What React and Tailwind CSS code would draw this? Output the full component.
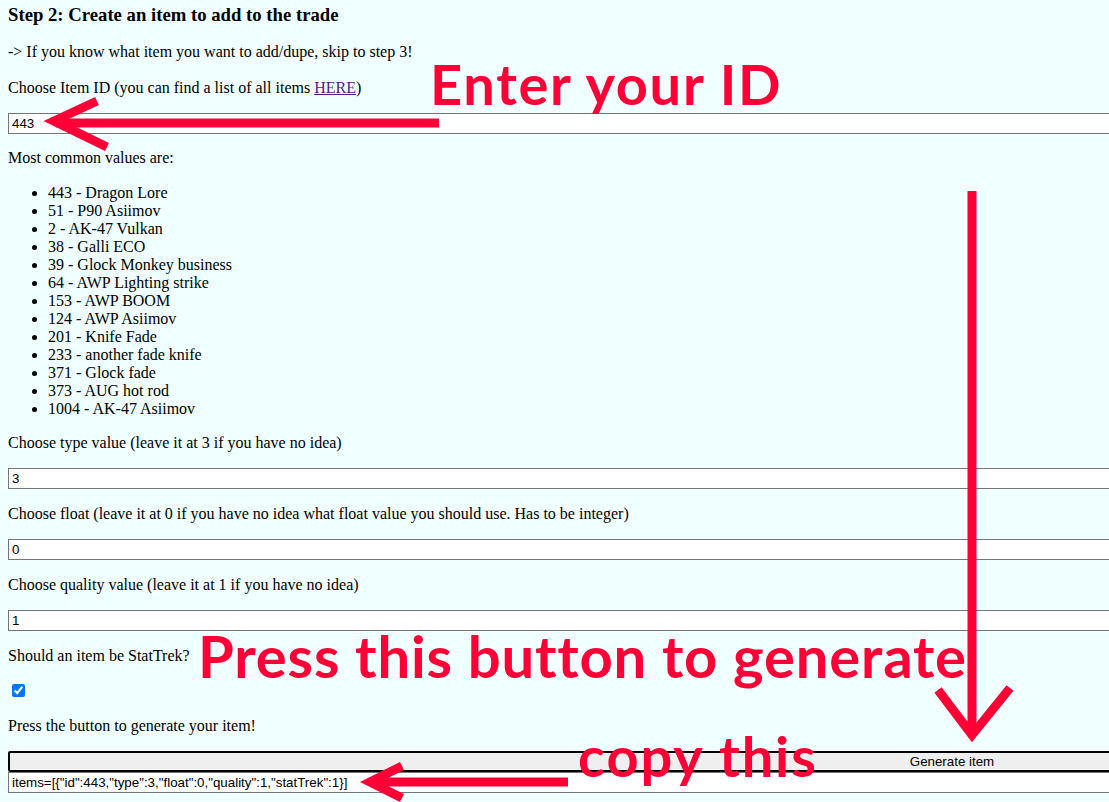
const items = [
  "443 - Dragon Lore",
  "51 - P90 Asiimov",
  "2 - AK-47 Vulkan",
  "38 - Galli ECO",
  "39 - Glock Monkey business",
  "64 - AWP Lighting strike",
  "153 - AWP BOOM",
  "124 - AWP Asiimov",
  "201 - Knife Fade",
  "233 - another fade knife",
  "371 - Glock fade",
  "373 - AUG hot rod",
  "1004 - AK-47 Asiimov",
];

function Field({ value, className = "" }) {
  return (
    <input
      readOnly
      value={value}
      className={
        "block w-full h-[21px] border border-[#767676] bg-white px-[3px] text-[13.33px] font-['Liberation_Sans',Arial,sans-serif] text-black outline-none " +
        className
      }
    />
  );
}

export default function App() {
  return (
    <div className="relative w-[1109px] h-[802px] overflow-hidden bg-[#f0ffff] text-black font-['Liberation_Serif','Times_New_Roman',serif] text-[16px] leading-[18px]">
      <div className="w-[1904px] px-2 pt-[5px]">
        <h3 className="text-[18.72px] leading-[20px] font-bold">
          Step 2: Create an item to add to the trade
        </h3>
        <p className="mt-[18px]">
          -&gt; If you know what item you want to add/dupe, skip to step 3!
        </p>
        <p className="mt-[18px]">
          Choose Item ID (you can find a list of all items{" "}
          <a href="#" className="text-[#551a8b] underline">
            HERE
          </a>
          )
        </p>
        <Field value="443" className="mt-4" />
        <p className="mt-[15px]">Most common values are:</p>
        <ul className="mt-[17px] list-disc pl-10">
          {items.map((it) => (
            <li key={it}>{it}</li>
          ))}
        </ul>
        <p className="mt-4">Choose type value (leave it at 3 if you have no idea)</p>
        <Field value="3" className="mt-4" />
        <p className="mt-4">
          Choose float (leave it at 0 if you have no idea what float value you should use. Has to be integer)
        </p>
        <Field value="0" className="mt-4" />
        <p className="mt-4">Choose quality value (leave it at 1 if you have no idea)</p>
        <Field value="1" className="mt-4" />
        <p className="mt-4">Should an item be StatTrek?</p>
        <div className="mt-[19px] h-[13px] flex">
          <input
            type="checkbox"
            defaultChecked
            className="ml-1 w-[13px] h-[13px] accent-[#0075ff]"
          />
        </div>
        <p className="mt-5">Press the button to generate your item!</p>
        <button className="mt-4 block w-full h-[21px] border-2 border-black rounded-[2px] bg-[#efefef] text-[13.33px] font-['Liberation_Sans',Arial,sans-serif] text-black">
          Generate item
        </button>
        <Field value={'items=[{"id":443,"type":3,"float":0,"quality":1,"statTrek":1}]'} />
      </div>

      <svg
        className="absolute inset-0 pointer-events-none"
        width="1109"
        height="802"
        viewBox="0 0 1109 802"
      >
        <g stroke="#ff0036" strokeWidth="9" fill="none" strokeLinejoin="miter">
          <line x1="56" y1="123" x2="439" y2="123" />
          <polyline points="97,101 54,121 107,147" />
          <line x1="972" y1="191" x2="972" y2="732" />
          <polyline points="938,690 972,735 1010,688" />
          <line x1="372" y1="782" x2="568" y2="782" />
          <polyline points="402,766 370,782 402,798" />
        </g>
      </svg>

      <div className="absolute left-[430px] top-[56px] text-[56px] leading-none font-bold tracking-[1.7px] text-[#ff0036] font-['Lato',sans-serif] whitespace-nowrap">
        Enter your ID
      </div>
      <div className="absolute left-[198px] top-[627px] text-[58px] leading-none font-bold tracking-[0.8px] text-[#ff0036] font-['Lato',sans-serif] whitespace-nowrap">
        Press this button to generate
      </div>
      <div className="absolute left-[578px] top-[728px] text-[56px] leading-none font-bold tracking-[1.9px] text-[#ff0036] font-['Lato',sans-serif] whitespace-nowrap">
        copy this
      </div>
    </div>
  );
}
